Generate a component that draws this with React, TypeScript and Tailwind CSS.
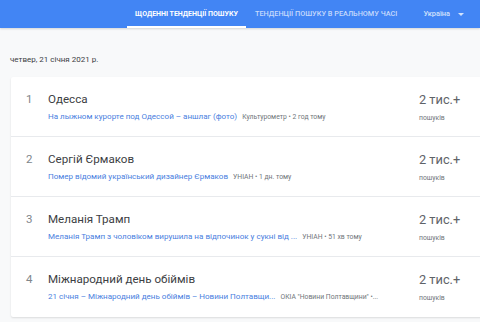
import React from 'react';

interface Trend {
  rank: number;
  title: string;
  link: string;
  source: string;
}

const trends: Trend[] = [
  { rank: 1, title: 'Одесса', link: 'На лыжном курорте под Одессой – аншлаг (фото)', source: 'Культурометр • 2 год тому' },
  { rank: 2, title: 'Сергій Єрмаков', link: 'Помер відомий український дизайнер Єрмаков', source: 'УНІАН • 1 дн. тому' },
  { rank: 3, title: 'Меланія Трамп', link: 'Меланія Трамп з чоловіком вирушила на відпочинок у сукні від ...', source: 'УНІАН • 51 хв тому' },
  { rank: 4, title: 'Міжнародний день обіймів', link: '21 січня – Міжнародний день обіймів – Новини Полтавщи...', source: 'ОКІА "Новини Полтавщини" •...' },
];

export default function App() {
  return (
    <div className="w-[480px] h-[322px] overflow-hidden bg-[#f8f9fa] font-['Roboto',sans-serif]">
      {/* top bar */}
      <div className="h-[28px] bg-[#4285f4] flex shadow-[0_1px_2px_rgba(0,0,0,0.15)]">
        <div className="ml-[127px] w-[119px] h-[28px] flex flex-col items-center">
          <span className="mt-[9px] h-[10px] leading-[10px] text-[7px] font-bold text-white whitespace-nowrap">ЩОДЕННІ ТЕНДЕНЦІЇ ПОШУКУ</span>
          <div className="mt-auto w-full h-[2px] bg-white" />
        </div>
        <div className="ml-[9px] pt-[9px]">
          <span className="block leading-[10px] text-[7.3px] font-medium text-[#c6dafc] whitespace-nowrap">ТЕНДЕНЦІЇ ПОШУКУ В РЕАЛЬНОМУ ЧАСІ</span>
        </div>
        <div className="ml-[26px] pt-[9px] flex items-center gap-[8px] h-[19px]">
          <span className="leading-[10px] text-[7.4px] font-medium text-[#d2e3fc]">Україна</span>
          <svg width="6" height="3" viewBox="0 0 10 5">
            <path d="M0 0 L5 5 L10 0 Z" fill="#d2e3fc" />
          </svg>
        </div>
      </div>

      <div className="pl-[10px] pt-[27px] leading-[10px] text-[8px] text-[#3c4043]">четвер, 21 січня 2021 р.</div>

      <div className="ml-[11px] mt-[12px] w-[480px] bg-white shadow-[0_1px_2px_rgba(0,0,0,0.12)] rounded-l-[2px]">
        {trends.map((t, i) => (
          <div
            key={t.rank}
            className={`h-[60px] flex items-start ${i < trends.length - 1 ? 'border-b border-[#e8eaed]' : ''}`}
          >
            <div className="w-[37px] pt-[15px] pl-[15px] leading-[14px] text-[11.5px] text-[#80868b]">{t.rank}</div>
            <div className="w-[371px] pt-[15px] min-w-0">
              <div className="text-[11.6px] leading-[14px] text-[#3c4043]">{t.title}</div>
              <div className="mt-[6px] flex items-baseline whitespace-nowrap leading-[10px]">
                <span className="text-[8.05px] text-[#4a80e0]">{t.link}</span>
                <span className="ml-[5px] text-[6.8px] text-[#70757a]">{t.source}</span>
              </div>
            </div>
            <div className="pt-[15px]">
              <div className="text-[12.8px] leading-[16px] text-[#5f6368]">2 тис.+</div>
              <div className="mt-[5px] leading-[10px] text-[6.8px] text-[#70757a]">пошуків</div>
            </div>
          </div>
        ))}
      </div>
    </div>
  );
}
